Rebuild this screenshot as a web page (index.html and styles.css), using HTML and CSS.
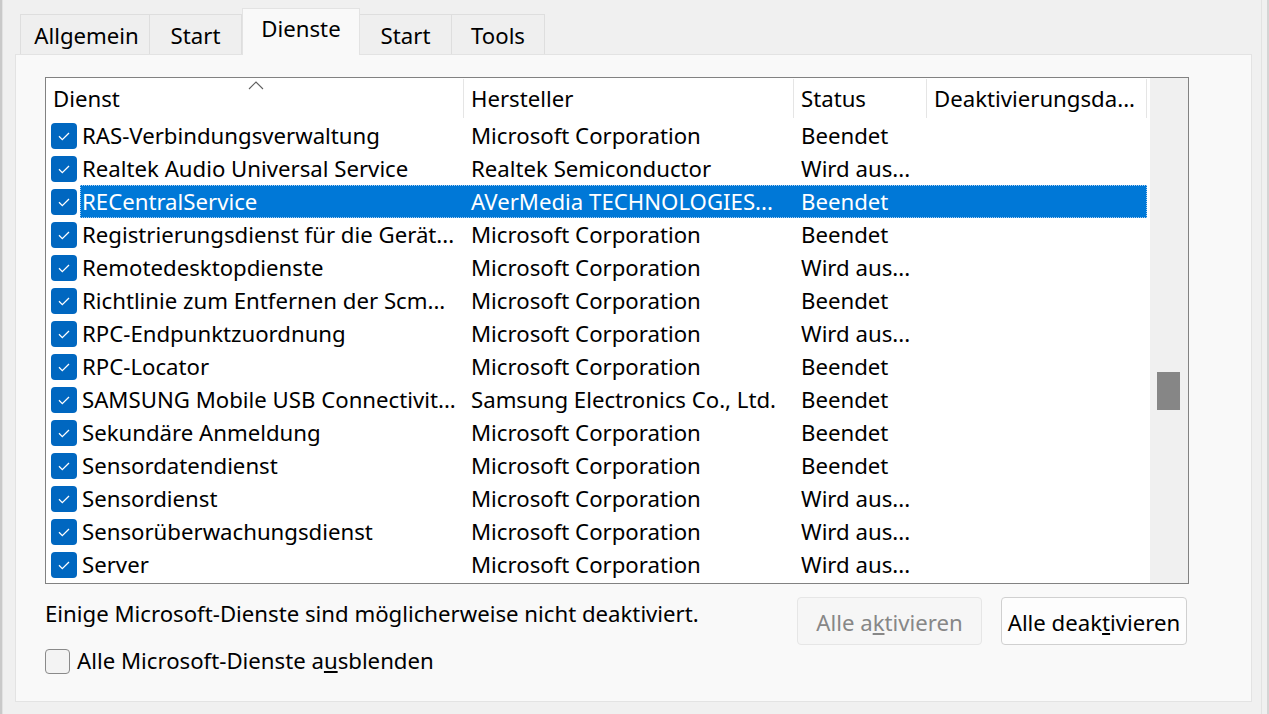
FILE: index.html
```html
<!DOCTYPE html>
<html lang="de">
<head>
<meta charset="utf-8">
<title>Systemkonfiguration – Dienste</title>
<link rel="stylesheet" href="styles.css">
</head>
<body>
<div class="screen">
  <div class="edge-left"></div>
  <div class="dialog">
    <div class="tabs">
      <div class="tab t-allg">Allgemein</div>
      <div class="tab t-start1">Start</div>
      <div class="tab t-dienste active">Dienste</div>
      <div class="tab t-start2">Start</div>
      <div class="tab t-tools">Tools</div>
    </div>
    <div class="panel">
      <div class="listbox">
        <div class="list">
          <div class="header">
            <div class="hcell h1">Dienst<span class="sort"><svg width="16" height="9" viewBox="0 0 16 9"><polyline points="1,8 8,1 15,8" fill="none" stroke="#5f5f5f" stroke-width="1.1"/></svg></span></div>
            <div class="hcell h2">Hersteller</div>
            <div class="hcell h3">Status</div>
            <div class="hcell h4">Deaktivierungsda...</div>
          </div>
          <div class="rows">
            <div class="row"><span class="check"><svg width="26" height="26" viewBox="0 0 26 26"><polyline points="8,13.3 11.3,16.6 18,10" fill="none" stroke="#fff" stroke-width="1.3"/></svg></span><div class="cells"><span class="c1">RAS-Verbindungsverwaltung</span><span class="c2">Microsoft Corporation</span><span class="c3">Beendet</span><span class="c4"></span></div></div>
            <div class="row"><span class="check"><svg width="26" height="26" viewBox="0 0 26 26"><polyline points="8,13.3 11.3,16.6 18,10" fill="none" stroke="#fff" stroke-width="1.3"/></svg></span><div class="cells"><span class="c1">Realtek Audio Universal Service</span><span class="c2">Realtek Semiconductor</span><span class="c3">Wird aus...</span><span class="c4"></span></div></div>
            <div class="row selected"><span class="check"><svg width="26" height="26" viewBox="0 0 26 26"><polyline points="8,13.3 11.3,16.6 18,10" fill="none" stroke="#fff" stroke-width="1.3"/></svg></span><div class="cells"><span class="c1">RECentralService</span><span class="c2">AVerMedia TECHNOLOGIES...</span><span class="c3">Beendet</span><span class="c4"></span></div></div>
            <div class="row"><span class="check"><svg width="26" height="26" viewBox="0 0 26 26"><polyline points="8,13.3 11.3,16.6 18,10" fill="none" stroke="#fff" stroke-width="1.3"/></svg></span><div class="cells"><span class="c1">Registrierungsdienst für die Gerät...</span><span class="c2">Microsoft Corporation</span><span class="c3">Beendet</span><span class="c4"></span></div></div>
            <div class="row"><span class="check"><svg width="26" height="26" viewBox="0 0 26 26"><polyline points="8,13.3 11.3,16.6 18,10" fill="none" stroke="#fff" stroke-width="1.3"/></svg></span><div class="cells"><span class="c1">Remotedesktopdienste</span><span class="c2">Microsoft Corporation</span><span class="c3">Wird aus...</span><span class="c4"></span></div></div>
            <div class="row"><span class="check"><svg width="26" height="26" viewBox="0 0 26 26"><polyline points="8,13.3 11.3,16.6 18,10" fill="none" stroke="#fff" stroke-width="1.3"/></svg></span><div class="cells"><span class="c1">Richtlinie zum Entfernen der Scm...</span><span class="c2">Microsoft Corporation</span><span class="c3">Beendet</span><span class="c4"></span></div></div>
            <div class="row"><span class="check"><svg width="26" height="26" viewBox="0 0 26 26"><polyline points="8,13.3 11.3,16.6 18,10" fill="none" stroke="#fff" stroke-width="1.3"/></svg></span><div class="cells"><span class="c1">RPC-Endpunktzuordnung</span><span class="c2">Microsoft Corporation</span><span class="c3">Wird aus...</span><span class="c4"></span></div></div>
            <div class="row"><span class="check"><svg width="26" height="26" viewBox="0 0 26 26"><polyline points="8,13.3 11.3,16.6 18,10" fill="none" stroke="#fff" stroke-width="1.3"/></svg></span><div class="cells"><span class="c1">RPC-Locator</span><span class="c2">Microsoft Corporation</span><span class="c3">Beendet</span><span class="c4"></span></div></div>
            <div class="row"><span class="check"><svg width="26" height="26" viewBox="0 0 26 26"><polyline points="8,13.3 11.3,16.6 18,10" fill="none" stroke="#fff" stroke-width="1.3"/></svg></span><div class="cells"><span class="c1">SAMSUNG Mobile USB Connectivit...</span><span class="c2">Samsung Electronics Co., Ltd.</span><span class="c3">Beendet</span><span class="c4"></span></div></div>
            <div class="row"><span class="check"><svg width="26" height="26" viewBox="0 0 26 26"><polyline points="8,13.3 11.3,16.6 18,10" fill="none" stroke="#fff" stroke-width="1.3"/></svg></span><div class="cells"><span class="c1">Sekundäre Anmeldung</span><span class="c2">Microsoft Corporation</span><span class="c3">Beendet</span><span class="c4"></span></div></div>
            <div class="row"><span class="check"><svg width="26" height="26" viewBox="0 0 26 26"><polyline points="8,13.3 11.3,16.6 18,10" fill="none" stroke="#fff" stroke-width="1.3"/></svg></span><div class="cells"><span class="c1">Sensordatendienst</span><span class="c2">Microsoft Corporation</span><span class="c3">Beendet</span><span class="c4"></span></div></div>
            <div class="row"><span class="check"><svg width="26" height="26" viewBox="0 0 26 26"><polyline points="8,13.3 11.3,16.6 18,10" fill="none" stroke="#fff" stroke-width="1.3"/></svg></span><div class="cells"><span class="c1">Sensordienst</span><span class="c2">Microsoft Corporation</span><span class="c3">Wird aus...</span><span class="c4"></span></div></div>
            <div class="row"><span class="check"><svg width="26" height="26" viewBox="0 0 26 26"><polyline points="8,13.3 11.3,16.6 18,10" fill="none" stroke="#fff" stroke-width="1.3"/></svg></span><div class="cells"><span class="c1">Sensorüberwachungsdienst</span><span class="c2">Microsoft Corporation</span><span class="c3">Wird aus...</span><span class="c4"></span></div></div>
            <div class="row"><span class="check"><svg width="26" height="26" viewBox="0 0 26 26"><polyline points="8,13.3 11.3,16.6 18,10" fill="none" stroke="#fff" stroke-width="1.3"/></svg></span><div class="cells"><span class="c1">Server</span><span class="c2">Microsoft Corporation</span><span class="c3">Wird aus...</span><span class="c4"></span></div></div>
          </div>
        </div>
        <div class="scrollbar"><div class="thumb"></div></div>
      </div>
      <div class="bottom">
        <div class="notes">
          <div class="note">Einige Microsoft-Dienste sind möglicherweise nicht deaktiviert.</div>
          <div class="hide-row"><span class="box"></span><span>Alle Microsoft-Dienste a<u>u</u>sblenden</span></div>
        </div>
        <div class="buttons">
          <div class="btn disabled">Alle a<u>k</u>tivieren</div>
          <div class="btn">Alle deak<u>t</u>ivieren</div>
        </div>
      </div>
    </div>
  </div>
  <div class="edge-right"><div class="edge-line"></div><div class="edge-dark"></div></div>
</div>
</body>
</html>
```

FILE: styles.css
```css
* { box-sizing: border-box; }
html, body { margin: 0; padding: 0; }
body {
  background: #f0f0f0;
  font-family: "Noto Sans", "Open Sans", sans-serif;
  font-size: 22.2px;
  color: #000;
}
.screen {
  width: 1269px;
  height: 714px;
  display: flex;
  background: #f0f0f0;
  overflow: hidden;
}
.edge-left {
  width: 3px;
  background: #c9c9c9;
  border-right: 1px solid #e2e2e2;
  flex: none;
}
.dialog {
  flex: none;
  width: 1237px;
  margin-left: 12px;
  padding-top: 8px;
  display: flex;
  flex-direction: column;
}
.tabs {
  display: flex;
  align-items: flex-end;
  height: 46px;
  padding-left: 5px;
}
.tab {
  height: 40px;
  display: flex;
  align-items: center;
  justify-content: center;
  border: 1px solid #dedede;
  border-bottom: none;
  border-left: none;
  background: #efefef;
  padding-top: 4px;
  line-height: 1;
}
.t-allg { width: 130px; border-left: 1px solid #dedede; padding-left: 3px; }
.t-start1 { width: 92px; }
.t-dienste { width: 118px; }
.t-start2 { width: 92px; }
.t-tools { width: 93px; }
.tab.active {
  height: 47px;
  margin-bottom: -1px;
  background: #f9f9f9;
  border: 1px solid #e3e3e3;
  border-bottom: none;
  padding-top: 0;
  padding-bottom: 5px;
  position: relative;
  z-index: 1;
}
.panel {
  width: 1237px;
  height: 648px;
  background: #f9f9f9;
  border: 1px solid #e3e3e3;
  padding: 22px 0 0 29px;
}
.listbox {
  width: 1144px;
  height: 507px;
  border: 1px solid #828282;
  background: #fff;
  display: flex;
}
.list {
  width: 1104px;
  display: flex;
  flex-direction: column;
}
.header {
  height: 41px;
  display: flex;
}
.hcell {
  height: 39px;
  margin-top: 1px;
  display: flex;
  align-items: center;
  padding-left: 7px;
  border-right: 1px solid #e5e5e5;
  white-space: nowrap;
  position: relative;
}
.h1 { width: 418px; }
.h2 { width: 330px; }
.h3 { width: 133px; }
.h4 { width: 220px; }
.sort {
  position: absolute;
  left: 202px;
  top: 2px;
  line-height: 0;
}
.row {
  height: 33px;
  display: flex;
  align-items: center;
}
.check {
  width: 26px;
  height: 26px;
  margin-left: 5px;
  margin-right: 3px;
  border-radius: 4px;
  background: #0067c0;
  line-height: 0;
}
.cells {
  display: flex;
  height: 33px;
  align-items: center;
  padding-bottom: 1px;
}
.cells span {
  white-space: nowrap;
  overflow: hidden;
  display: block;
}
.c1 { width: 384px; padding-left: 2px; }
.c2 { width: 330px; padding-left: 7px; }
.c3 { width: 133px; padding-left: 7px; }
.c4 { width: 220px; }
.row.selected .cells {
  background: #0078d7;
  color: #fff;
  outline: 1px dotted #a9cdf0;
  outline-offset: -1px;
}
.scrollbar {
  width: 38px;
  background: #f0f0f0;
  padding: 294px 0 0 7px;
}
.thumb {
  width: 23px;
  height: 38px;
  background: #868686;
}
.bottom {
  display: flex;
  justify-content: space-between;
  width: 1144px;
  padding-right: 2px;
  margin-top: 13px;
}
.notes {
  display: flex;
  flex-direction: column;
}
.note {
  line-height: 30px;
  margin-top: 2px;
}
.hide-row {
  display: flex;
  align-items: center;
  margin-top: 17px;
  line-height: 30px;
}
.box {
  width: 25px;
  height: 25px;
  border: 1px solid #8a8a8a;
  border-radius: 4px;
  background: #f3f3f3;
  margin-right: 7px;
}
.buttons {
  display: flex;
  gap: 19px;
}
.btn {
  width: 186px;
  height: 48px;
  display: flex;
  align-items: center;
  justify-content: center;
  background: #fdfdfd;
  border: 1px solid #d0d0d0;
  border-radius: 4px;
  white-space: nowrap;
  padding-top: 2px;
}
.btn.disabled {
  width: 185px;
  background: #f6f6f6;
  border-color: #e6e6e6;
  color: #878787;
}
.edge-right {
  flex: 1;
  display: flex;
  justify-content: flex-end;
}
.edge-line {
  width: 1px;
  background: #e2e2e2;
  margin-right: 5px;
}
.edge-dark {
  width: 2px;
  background: #d4d4d4;
}
```
